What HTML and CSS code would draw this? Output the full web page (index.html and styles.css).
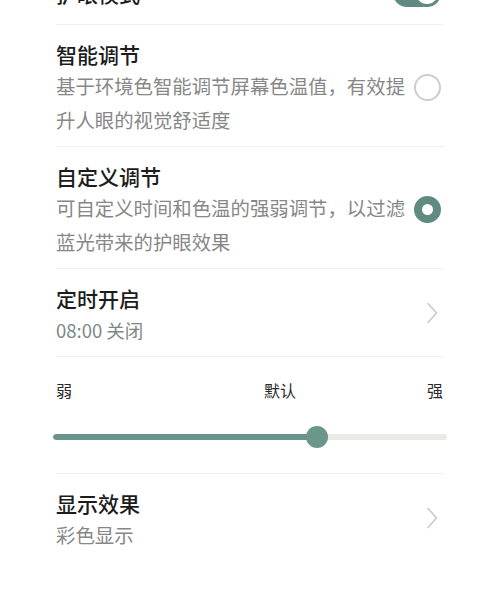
FILE: index.html
```html
<!DOCTYPE html>
<html lang="zh-CN">
<head>
<meta charset="utf-8">
<link rel="stylesheet" href="styles.css">
</head>
<body>
<div class="page">
  <div class="row top-row">
    <div class="title">护眼模式</div>
    <div class="toggle"><span class="toggle-knob"></span></div>
  </div>
  <div class="row">
    <div class="text">
      <div class="title">智能调节</div>
      <div class="desc">基于环境色智能调节屏幕色温值，有效提升人眼的视觉舒适度</div>
    </div>
    <span class="radio"></span>
  </div>
  <div class="row">
    <div class="text">
      <div class="title">自定义调节</div>
      <div class="desc">可自定义时间和色温的强弱调节，以过滤蓝光带来的护眼效果</div>
    </div>
    <span class="radio checked"></span>
  </div>
  <div class="row">
    <div class="text">
      <div class="title">定时开启</div>
      <div class="desc teal">08:00 关闭</div>
    </div>
    <svg class="chev" width="12" height="22" viewBox="0 0 12 22"><path d="M2 1.5 L10.5 11 L2 20.5" fill="none" stroke="#c9c9c9" stroke-width="1.6" stroke-linecap="round" stroke-linejoin="round"/></svg>
  </div>
  <div class="slider-block">
    <div class="labels">
      <span>弱</span>
      <span>默认</span>
      <span class="right">强</span>
    </div>
    <div class="slider">
      <div class="track"><div class="fill" style="width:66.9%"></div></div>
      <span class="thumb" style="left:66.9%"></span>
    </div>
  </div>
  <div class="row last">
    <div class="text">
      <div class="title">显示效果</div>
      <div class="desc">彩色显示</div>
    </div>
    <svg class="chev" width="12" height="22" viewBox="0 0 12 22"><path d="M2 1.5 L10.5 11 L2 20.5" fill="none" stroke="#c9c9c9" stroke-width="1.6" stroke-linecap="round" stroke-linejoin="round"/></svg>
  </div>
</div>
</body>
</html>
```
FILE: styles.css
```css
html, body {
  margin: 0;
  padding: 0;
  background: #ffffff;
}
body {
  font-family: "Noto Sans CJK SC", "Noto Sans", sans-serif;
  color: #1a1a1a;
}
.page {
  margin-top: -39px;
  padding: 0 56px;
}
.row {
  display: flex;
  align-items: center;
  padding: 14px 0 9px;
  border-bottom: 1px solid #efefef;
}
.row.last {
  border-bottom: none;
}
.top-row {
  padding: 0;
  height: 63px;
  justify-content: space-between;
}
.text {
  width: 355px;
  flex: none;
}
.title {
  font-size: 21px;
  line-height: 30px;
  font-weight: 500;
  color: #1c1c1c;
}
.desc {
  font-size: 19.4px;
  line-height: 34px;
  color: #878787;
}
.desc.teal {
  font-size: 18.5px;
  color: #7b8986;
}
.toggle {
  width: 48px;
  height: 28px;
  border-radius: 14px;
  background: #5f8b82;
  margin-right: 3px;
  display: flex;
  align-items: center;
  justify-content: flex-end;
  padding: 0 3px;
  box-sizing: border-box;
}
.toggle-knob {
  width: 22px;
  height: 22px;
  border-radius: 50%;
  background: #ffffff;
}
.radio {
  margin-left: auto;
  margin-right: 3px;
  margin-top: -2px;
  width: 27px;
  height: 27px;
  box-sizing: border-box;
  border-radius: 50%;
  border: 2px solid #cdcdcd;
}
.radio.checked {
  border: 8.5px solid #5f8b82;
}
.chev {
  margin-left: auto;
  margin-right: 6px;
  margin-top: -4px;
}
.slider-block {
  padding: 22px 0 25px;
  border-bottom: 1px solid #efefef;
}
.labels {
  display: grid;
  grid-template-columns: 208px 32px 1fr;
  font-size: 16px;
  line-height: 22px;
  color: #2a2a2a;
}
.labels .right {
  text-align: right;
  padding-right: 1px;
}
.slider {
  position: relative;
  margin: 25px -3px 0;
  height: 22px;
  display: flex;
  align-items: center;
}
.track {
  width: 100%;
  height: 6px;
  border-radius: 3px;
  background: #e9e9e5;
  overflow: hidden;
}
.fill {
  height: 100%;
  background: #6a948b;
  border-radius: 3px;
}
.thumb {
  position: absolute;
  top: 0;
  width: 22px;
  height: 22px;
  margin-left: -11px;
  border-radius: 50%;
  background: #6a968c;
}
```
